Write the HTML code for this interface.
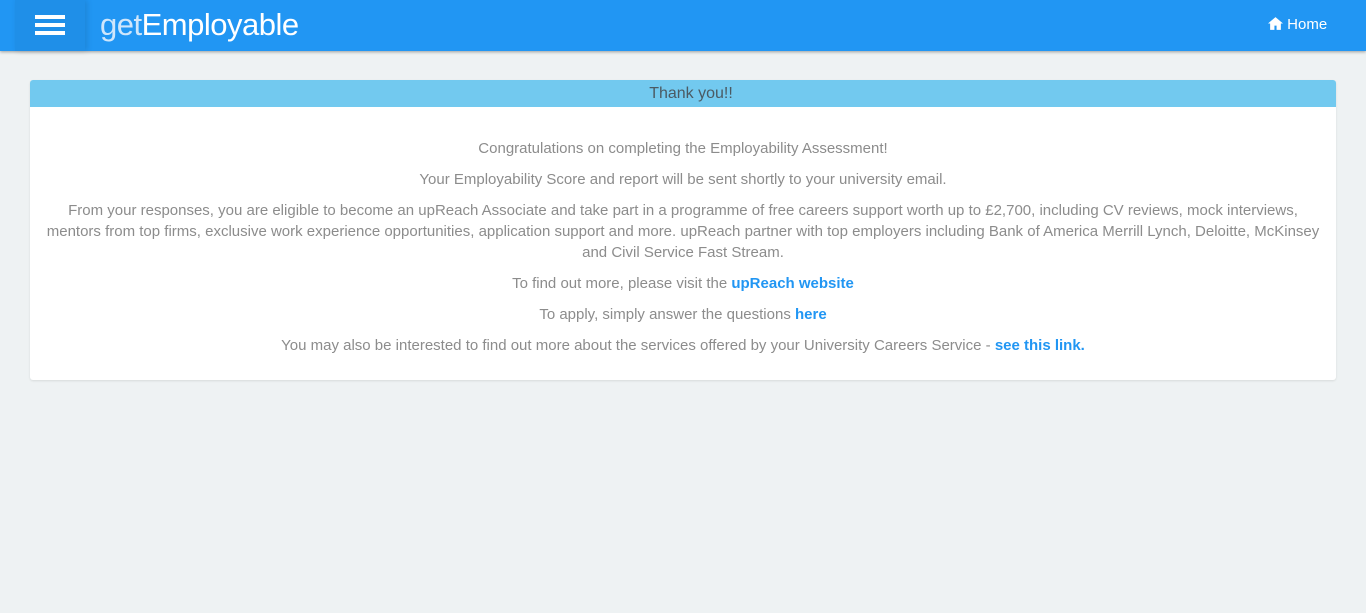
<!DOCTYPE html>
<html><head><style>
body{margin:0;background:#eef2f3;font-family:"Liberation Sans",Arial,sans-serif;width:1366px;height:613px;overflow:hidden}
.nav{position:absolute;top:0;left:0;width:1366px;height:51px;background:#2196f3;box-shadow:0 1px 3px rgba(0,0,0,.35)}
.ham{position:absolute;left:15px;top:0;width:70px;height:51px;background:#1f8fe8;box-shadow:2px 0 6px rgba(0,0,0,.12)}
.ham i{position:absolute;left:20px;width:30px;height:4px;background:#fff}
.logo{position:absolute;left:100px;top:7px;color:#fff;font-size:31px;letter-spacing:-0.5px}
.home{position:absolute;left:1268px;top:16px;color:#fff;font-size:15px}
.panel{position:absolute;left:30px;top:80px;width:1306px;height:300px;background:#fff;border-radius:3px;box-shadow:0 1px 2px rgba(0,0,0,.1)}
.ph{height:27px;background:#72c9ef;border-radius:3px 3px 0 0;text-align:center;color:#4b5a63;font-size:16px;line-height:27px;padding-left:16px}
.pb{padding:31px 14px 0;text-align:center;color:#8c8c8c;font-size:15px;line-height:21px}
.pb p{margin:0 0 10px}
.pb a{color:#2196f3;font-weight:bold;text-decoration:none}
</style></head><body>
<div class="nav">
<div class="ham"><i style="top:15px"></i><i style="top:23px"></i><i style="top:31px"></i></div>
<div class="logo"><span style="color:#cfe6fb">get</span>Employable</div>
<div class="home"><svg width="15" height="13" viewBox="0 0 14 12" style="vertical-align:-1px"><path d="M7 0L0 6h2v6h4V8h2v4h4V6h2z" fill="#fff"/></svg> Home</div>
</div>
<div class="panel">
<div class="ph">Thank you!!</div>
<div class="pb">
<p>Congratulations on completing the Employability Assessment!</p>
<p>Your Employability Score and report will be sent shortly to your university email.</p>
<p>From your responses, you are eligible to become an upReach Associate and take part in a programme of free careers support worth up to £2,700, including CV reviews, mock interviews, mentors from top firms, exclusive work experience opportunities, application support and more. upReach partner with top employers including Bank of America Merrill Lynch, Deloitte, McKinsey and Civil Service Fast Stream.</p>
<p>To find out more, please visit the <a>upReach website</a></p>
<p>To apply, simply answer the questions <a>here</a></p>
<p>You may also be interested to find out more about the services offered by your University Careers Service - <a>see this link.</a></p>
</div></div>
</body></html>
